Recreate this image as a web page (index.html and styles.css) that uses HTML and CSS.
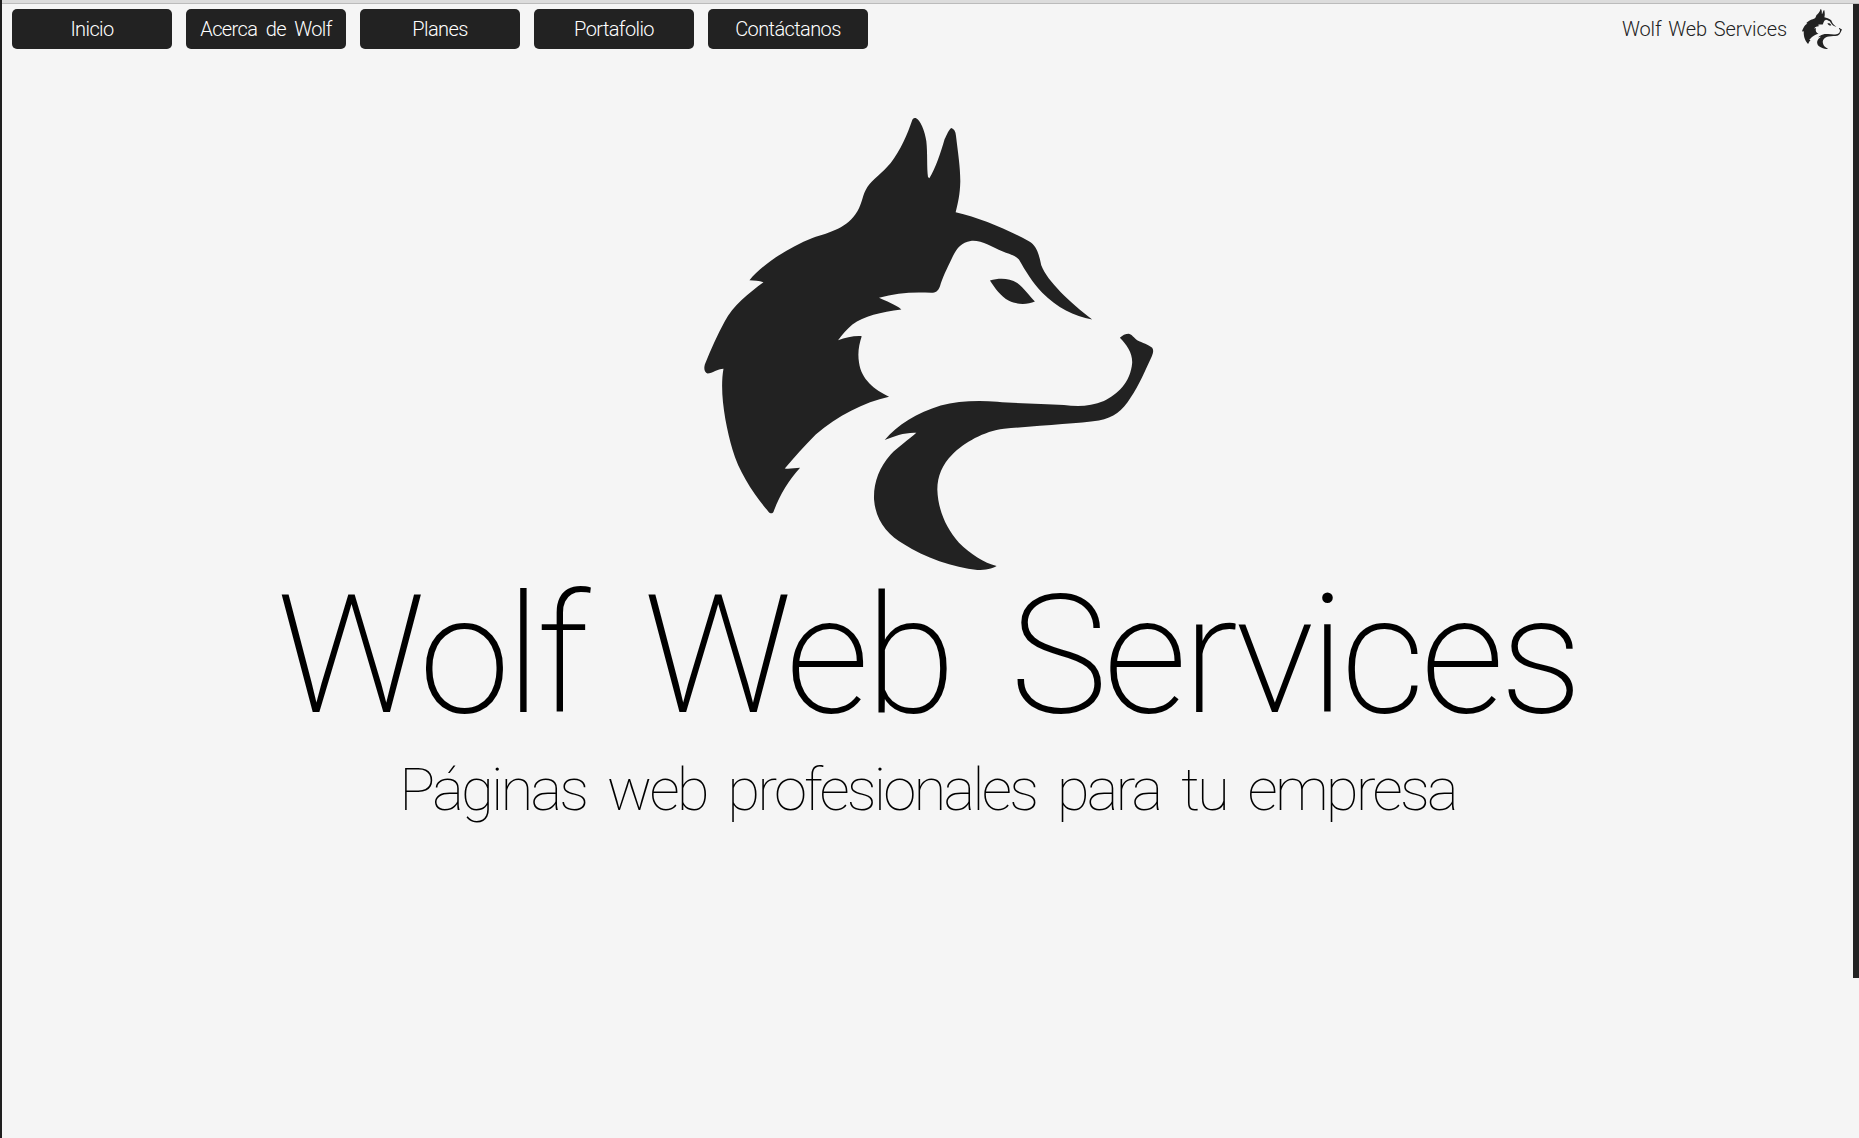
FILE: index.html
```html
<!DOCTYPE html>
<html lang="es">
<head>
<meta charset="utf-8">
<title>Wolf Web Services</title>
<link rel="stylesheet" href="styles.css">
</head>
<body>
<svg class="defs" width="0" height="0" aria-hidden="true">
  <symbol id="wolf" viewBox="40 55 1350 1357">
    <path d="M675 55C688 58 703 95 707 125C711 160 708 205 712 232L716 236C735 205 750 160 762 118C768 108 774 90 782 85C790 88 795 95 796 108C802 160 809 200 809 245C808 285 802 310 795 338C870 355 950 390 1015 425C1040 440 1045 465 1052 497C1070 545 1140 610 1205 660C1150 650 1100 625 1055 580C1025 548 1005 515 985 480C975 468 960 465 935 455C905 442 870 420 840 424C810 428 795 450 782 480C770 505 755 535 748 560C742 575 735 580 722 580C670 576 615 580 565 595C585 605 615 615 632 630C570 638 520 650 485 675C468 690 455 705 442 722C465 715 490 708 513 710C505 735 500 760 505 790C512 840 550 870 595 892C520 908 440 950 375 1005C340 1040 310 1075 282 1107C295 1110 312 1105 328 1105C295 1140 265 1190 248 1238C245 1243 238 1243 233 1237C190 1185 145 1120 125 1050C105 980 85 880 98 808C80 808 65 822 50 822C42 820 38 810 42 795C60 750 80 705 102 665C125 620 175 580 218 548C205 542 190 544 176 542C215 495 290 445 365 415C420 398 470 385 500 335C515 310 515 285 530 262C545 240 575 220 600 190C630 150 650 105 665 60C668 56 671 55 675 55Z"/>
    <path d="M582 1022C620 975 680 940 750 918C800 905 860 902 920 907C980 912 1060 914 1120 917C1160 922 1200 922 1240 905C1280 885 1320 850 1325 790C1326 760 1308 735 1288 715C1295 708 1305 703 1315 703C1325 705 1330 716 1340 722C1355 730 1375 735 1385 745C1390 752 1388 760 1384 770C1365 810 1345 860 1320 895C1295 935 1270 955 1225 963C1160 972 1050 978 940 988C880 995 820 1030 785 1065C755 1095 740 1130 740 1170C742 1230 765 1285 805 1330C840 1365 880 1390 918 1400C905 1408 885 1412 860 1412C790 1405 700 1375 640 1335C590 1305 555 1265 550 1200C548 1150 565 1105 600 1065C625 1040 655 1020 677 1000C645 998 610 1010 582 1022Z"/>
    <path d="M898 543C925 535 955 535 980 550C1000 565 1018 590 1033 606C1010 616 980 616 955 604C930 590 912 565 898 543Z"/>
  </symbol>
</svg>
<div class="scrollbar"></div>
<div class="topline"></div>
<div class="page">
  <header class="topbar">
    <nav class="menu">
      <a class="menu-btn" href="#">Inicio</a>
      <a class="menu-btn" href="#">Acerca de Wolf</a>
      <a class="menu-btn" href="#">Planes</a>
      <a class="menu-btn" href="#">Portafolio</a>
      <a class="menu-btn" href="#">Contáctanos</a>
    </nav>
    <div class="brand">
      <span class="brand-name">Wolf Web Services</span>
      <svg class="brand-logo"><use href="#wolf"/></svg>
    </div>
  </header>
  <main class="hero">
    <svg class="hero-logo"><use href="#wolf"/></svg>
    <h1 class="hero-title">Wolf Web Services</h1>
    <p class="hero-sub">Páginas web profesionales para tu empresa</p>
  </main>
</div>
</body>
</html>
```
FILE: styles.css
```css
* { box-sizing: border-box; }
html, body { margin: 0; height: 100%; }
body {
  background: #f5f5f5;
  font-family: "Roboto", "Liberation Sans", sans-serif;
  overflow: hidden;
  border-left: 2px solid #1f1f1f;
}
.defs { position: absolute; }
.topline {
  height: 4px;
  background: #dcdcdc;
  border-bottom: 1px solid #bbbbbb;
}
.page { padding-right: 6px; }
.scrollbar {
  position: absolute;
  top: 4px;
  right: 0;
  width: 6px;
  height: 974px;
  background: #222222;
}
.topbar {
  display: flex;
  justify-content: space-between;
  align-items: center;
  padding: 5px 11px 0 10px;
}
.menu { display: flex; gap: 14px; }
.menu-btn {
  width: 160px;
  height: 40px;
  display: flex;
  align-items: center;
  justify-content: center;
  background: #222222;
  border-radius: 5px;
  color: #ffffff;
  font-size: 20px;
  font-weight: 300;
  letter-spacing: -.6px;
  word-spacing: 4px;
  text-decoration: none;
}
.brand { display: flex; align-items: center; gap: 15px; }
.brand-name { font-size: 20px; font-weight: 300; color: #222222; letter-spacing: -.1px; word-spacing: 2px; }
.brand-logo { width: 40px; height: 40px; fill: #222222; }
.hero {
  display: flex;
  flex-direction: column;
  align-items: center;
  padding-top: 69px;
}
.hero-logo { width: 450px; height: 452px; margin-left: 2px; fill: #222222; }
.hero-title {
  margin: 6px 0 0;
  font-size: 165px;
  line-height: 160px;
  font-weight: 200;
  letter-spacing: -4.4px;
  word-spacing: 23px;
  color: #000000;
  white-space: nowrap;
}
.hero-sub {
  margin: 19px 0 0;
  font-size: 60px;
  line-height: 70px;
  font-weight: 100;
  letter-spacing: -2.85px;
  word-spacing: 9px;
  color: #000000;
  white-space: nowrap;
}
```
